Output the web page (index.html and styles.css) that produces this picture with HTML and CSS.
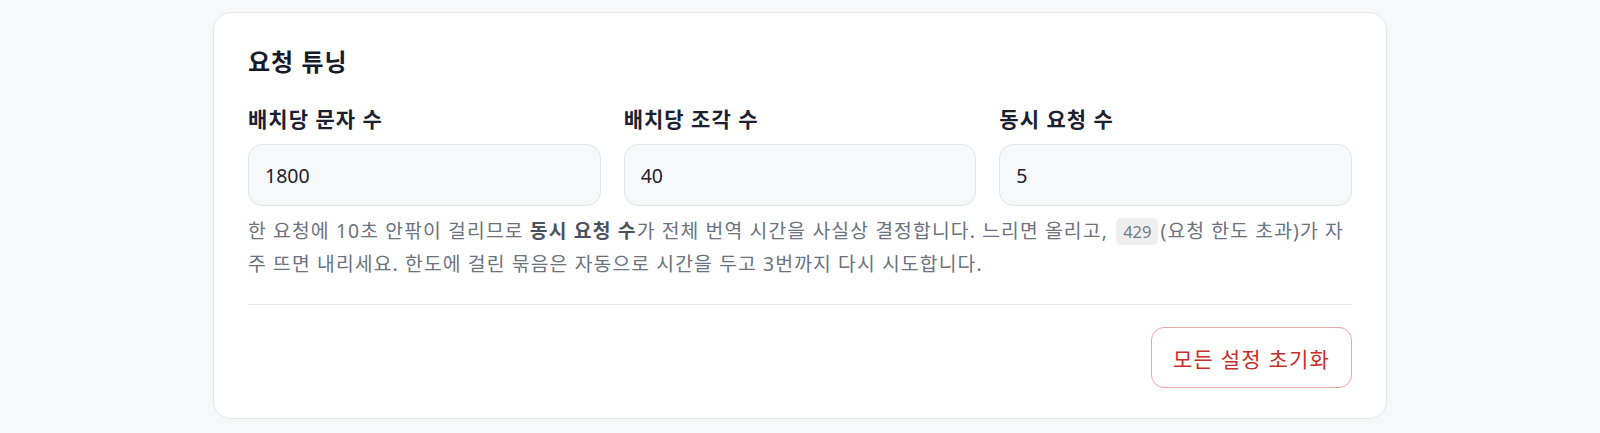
FILE: index.html
```html
<!DOCTYPE html>
<html lang="ko">
<head>
<meta charset="utf-8">
<title>요청 튜닝</title>
<link rel="stylesheet" href="styles.css">
</head>
<body>
<main class="page">
  <section class="card">
    <h2 class="card-title">요청 튜닝</h2>
    <div class="fields">
      <div class="field">
        <label class="field-label" for="chars">배치당 문자 수</label>
        <input class="field-input" id="chars" type="text" value="1800">
      </div>
      <div class="field">
        <label class="field-label" for="pieces">배치당 조각 수</label>
        <input class="field-input" id="pieces" type="text" value="40">
      </div>
      <div class="field">
        <label class="field-label" for="conc">동시 요청 수</label>
        <input class="field-input" id="conc" type="text" value="5">
      </div>
    </div>
    <p class="help">한 요청에 10초 안팎이 걸리므로 <strong>동시 요청 수</strong>가 전체 번역 시간을 사실상 결정합니다. 느리면 올리고, <code>429</code>(요청 한도 초과)가 자주 뜨면 내리세요. 한도에 걸린 묶음은 자동으로 시간을 두고 3번까지 다시 시도합니다.</p>
    <div class="actions">
      <button class="btn-reset" type="button">모든 설정 초기화</button>
    </div>
  </section>
</main>
</body>
</html>
```

FILE: styles.css
```css
* {
  box-sizing: border-box;
}

html, body {
  margin: 0;
  padding: 0;
  background: #f7f8fa;
}

body {
  font-family: "Noto Sans", "Noto Sans CJK KR", sans-serif;
  color: #1b2130;
}

.page {
  padding-top: 12px;
  display: flex;
  justify-content: center;
}

.card {
  width: 1174px;
  background: #ffffff;
  border: 1px solid #e3e6eb;
  border-radius: 18px;
  padding: 34px 34px 30px;
}

.card-title {
  margin: 0;
  font-size: 24px;
  line-height: 30px;
  font-weight: 700;
  letter-spacing: 1px;
  color: #141a28;
}

.fields {
  margin-top: 30px;
  display: grid;
  grid-template-columns: repeat(3, 1fr);
  column-gap: 23px;
}

.field {
  display: flex;
  flex-direction: column;
  gap: 12px;
}

.field-label {
  font-size: 21px;
  line-height: 25px;
  font-weight: 700;
  letter-spacing: 1px;
  color: #1b2130;
}

.field-input {
  height: 62px;
  width: 100%;
  border: 1px solid #e1e4e9;
  border-radius: 14px;
  background: #f7f8fa;
  padding: 0 16px;
  font-family: inherit;
  font-size: 19.5px;
  color: #1b2130;
  outline: none;
}

.help {
  margin: 9px 0 0;
  font-size: 19.3px;
  line-height: 32px;
  letter-spacing: 1.15px;
  color: #6b7280;
}

.help strong {
  font-weight: 700;
  color: #4b5361;
}

.help code {
  font-family: inherit;
  font-size: 16.5px;
  letter-spacing: 0;
  background: #efefef;
  color: #737883;
  border-radius: 5px;
  padding: 2px 7px;
  margin: 0 2px;
}

.actions {
  margin-top: 24px;
  border-top: 1px solid #e6e8ec;
  padding-top: 22px;
  display: flex;
  justify-content: flex-end;
}

.btn-reset {
  height: 61px;
  padding: 0 21px;
  background: #ffffff;
  border: 1px solid #eda6a6;
  border-radius: 13px;
  color: #c4302b;
  font-family: inherit;
  font-size: 21px;
  font-weight: 400;
  letter-spacing: 1.2px;
  cursor: pointer;
}
```
